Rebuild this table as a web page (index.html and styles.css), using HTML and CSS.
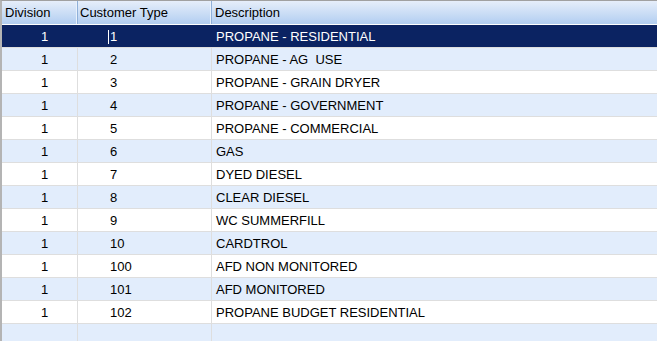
FILE: index.html
```html
<!DOCTYPE html>
<html>
<head>
<meta charset="utf-8">
<link rel="stylesheet" href="styles.css">
</head>
<body>
<div class="grid">
  <div class="row head">
    <div class="c c1">Division</div>
    <div class="c c2">Customer Type</div>
    <div class="c c3">Description</div>
  </div>
  <div class="row sel">
    <div class="c c1 num">1</div>
    <div class="c c2"><span class="caret"></span>1</div>
    <div class="c c3">PROPANE - RESIDENTIAL</div>
  </div>
  <div class="row alt">
    <div class="c c1 num">1</div><div class="c c2">2</div><div class="c c3">PROPANE - AG&nbsp; USE</div>
  </div>
  <div class="row">
    <div class="c c1 num">1</div><div class="c c2">3</div><div class="c c3">PROPANE - GRAIN DRYER</div>
  </div>
  <div class="row alt">
    <div class="c c1 num">1</div><div class="c c2">4</div><div class="c c3">PROPANE - GOVERNMENT</div>
  </div>
  <div class="row">
    <div class="c c1 num">1</div><div class="c c2">5</div><div class="c c3">PROPANE - COMMERCIAL</div>
  </div>
  <div class="row alt">
    <div class="c c1 num">1</div><div class="c c2">6</div><div class="c c3">GAS</div>
  </div>
  <div class="row">
    <div class="c c1 num">1</div><div class="c c2">7</div><div class="c c3">DYED DIESEL</div>
  </div>
  <div class="row alt">
    <div class="c c1 num">1</div><div class="c c2">8</div><div class="c c3">CLEAR DIESEL</div>
  </div>
  <div class="row">
    <div class="c c1 num">1</div><div class="c c2">9</div><div class="c c3">WC SUMMERFILL</div>
  </div>
  <div class="row alt">
    <div class="c c1 num">1</div><div class="c c2">10</div><div class="c c3">CARDTROL</div>
  </div>
  <div class="row">
    <div class="c c1 num">1</div><div class="c c2">100</div><div class="c c3">AFD NON MONITORED</div>
  </div>
  <div class="row alt">
    <div class="c c1 num">1</div><div class="c c2">101</div><div class="c c3">AFD MONITORED</div>
  </div>
  <div class="row">
    <div class="c c1 num">1</div><div class="c c2">102</div><div class="c c3">PROPANE BUDGET RESIDENTIAL</div>
  </div>
  <div class="row alt empty">
    <div class="c c1"></div><div class="c c2"></div><div class="c c3"></div>
  </div>
</div>
</body>
</html>
```
FILE: styles.css
```css
html, body {
  margin: 0;
  padding: 0;
  background: #ffffff;
}
body {
  width: 657px;
  height: 342px;
  overflow: hidden;
  font-family: "Liberation Sans", Arial, sans-serif;
  font-size: 13px;
  color: #000;
}
.grid {
  display: flex;
  flex-direction: column;
  border-top: 1px solid #a0a0a0;
  border-left: 2px solid #b4b4b4;
  height: 341px;
  box-sizing: border-box;
}
.row {
  display: grid;
  grid-template-columns: 76px 134px 1fr;
  height: 23px;
  box-sizing: border-box;
  border-bottom: 1px solid #dedede;
  background: #ffffff;
}
.row.alt {
  background: #e2edfc;
}
.row.sel {
  background: #0b2362;
  color: #ffffff;
  border-bottom-color: #dedede;
}
.row.head {
  height: 24px;
  background: linear-gradient(#e6eefa, #b2cef1);
  border-bottom: 1px solid #ffffff;
}
.row.empty {
  border-bottom: none;
  flex: 1;
}
.c {
  display: flex;
  align-items: center;
  padding-left: 3px;
  padding-top: 1px;
  white-space: nowrap;
  overflow: hidden;
  border-right: 1px solid #dedede;
}
.row.head .c {
  padding-top: 0;
}
.row.sel .c {
  border-right-color: #0b2362;
}
.row.head .c {
  border-right: 1px solid #8fb0d9;
  box-shadow: inset -1px 0 0 #e9f1fb;
  padding-left: 3px;
}
.row.head .c3 {
  border-right: none;
  box-shadow: none;
}
.c3 {
  border-right: none;
}
.c1.num {
  justify-content: center;
  padding-left: 10px;
}
.row .c2 {
  padding-left: 32px;
}
.row.head .c2 {
  padding-left: 2px;
}
.row .c3 {
  padding-left: 4px;
}
.row.head .c3 {
  padding-left: 3px;
}
.caret {
  display: inline-block;
  width: 1px;
  height: 14px;
  background: #ffffff;
  margin-right: 1px;
  margin-left: -2px;
}
```
